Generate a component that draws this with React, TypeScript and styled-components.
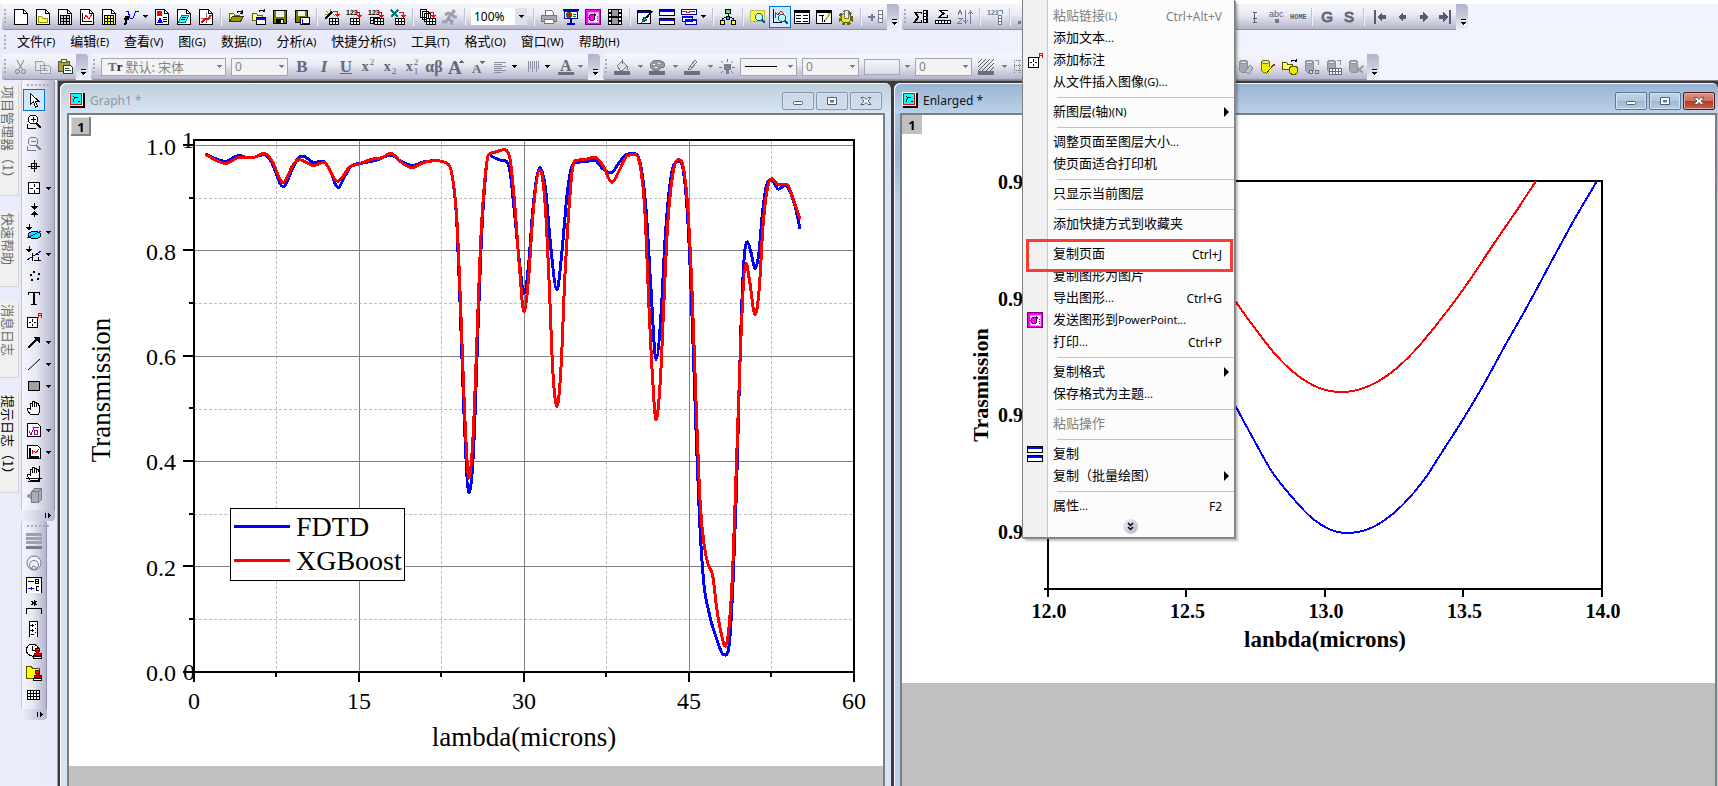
import React from "react";
import styled, { createGlobalStyle, css } from "styled-components";

const UI = `"Noto Sans CJK SC", "Noto Sans", sans-serif`;
const LATIN = `"Noto Sans", "Noto Sans CJK SC", sans-serif`;
const SERIF = `"Liberation Serif", serif`;
const GREY = "#757b8a";

const GlobalStyle = createGlobalStyle`
  * { box-sizing: border-box; }
  html, body { margin: 0; height: 100%; overflow: hidden; }
  body { font-family: ${UI}; font-size: 13px; color: #000; background: #ebecfb; }
  button, select { font: inherit; color: inherit; margin: 0; padding: 0; border: 0; background: none; }
  svg { display: block; }
`;

/* ---------- shell ---------- */

const Shell = styled.div`
  display: flex;
  flex-direction: column;
  height: 100vh;
  border-top: 4px solid #fff;
  background: linear-gradient(90deg, #ebecfb 0%, #eaebfa 30%, #f1f4fd 75%);
`;

const BarRow = styled.div`
  display: flex;
  flex: none;
  gap: 3px;
  height: 26px;
  padding-left: 2px;
`;

const Toolbar = styled.div`
  display: flex;
  flex: none;
  height: 26px;
`;

const ToolbarFace = styled.div`
  display: flex;
  align-items: center;
  border-bottom: 1px solid #9392ae;
  border-radius: 3px 0 0 3px;
  background: linear-gradient(180deg, #f6f7fd 0%, #ebecf5 40%, #b5b5cc 100%);
`;

const Grip = styled.span<{ $across?: boolean }>`
  flex: none;
  ${(p) =>
    p.$across
      ? css`
          width: 23px;
          height: 2px;
          margin: 4px 0 3px 5px;
          background: repeating-linear-gradient(90deg, #a9a9b9 0 2px, transparent 2px 4px);
        `
      : css`
          width: 2px;
          height: 15px;
          margin: 0 4px 0 2px;
          background: repeating-linear-gradient(180deg, #a9a9b9 0 2px, transparent 2px 4px);
        `}
`;

const BarEnd = styled.button`
  display: flex;
  align-items: flex-end;
  justify-content: center;
  width: 12px;
  padding: 0 0 4px 2px;
  border-radius: 0 4px 4px 0;
  background: linear-gradient(180deg, #b2b1ca 0%, #c9c9dc 45%, #f0f0fa 100%);
`;

const ToolButton = styled.button<{ $active?: boolean }>`
  display: flex;
  align-items: center;
  justify-content: center;
  flex: none;
  width: 22px;
  height: 22px;
  ${(p) =>
    p.$active &&
    css`
      border: 1px solid #0078d7;
      background: #d3e5f8;
    `}
`;

const GlyphButton = styled(ToolButton)<{ $italic?: boolean; $underline?: boolean; $size?: number; $sans?: boolean }>`
  font-family: ${(p) => (p.$sans ? `"Liberation Sans", sans-serif` : SERIF)};
  font-size: ${(p) => p.$size || 17}px;
  font-weight: ${(p) => (p.$sans ? "normal" : "bold")};
  font-style: ${(p) => (p.$italic ? "italic" : "normal")};
  text-decoration: ${(p) => (p.$underline ? "underline" : "none")};
  line-height: 20px;
  color: #636979;
  -webkit-text-stroke: ${(p) => (p.$sans ? "1px #636979" : "0")};
`;

const Scripts = styled.span`
  display: flex;
  flex-direction: column;
  justify-content: space-between;
  height: 18px;
  margin-left: 1px;
  font-size: 9px;
  line-height: 9px;
  font-weight: normal;
`;

const Drop = styled.button<{ $w?: number }>`
  display: flex;
  flex: none;
  align-items: center;
  justify-content: ${(p) => ((p.$w || 9) > 11 ? "center" : "flex-start")};
  width: ${(p) => p.$w || 9}px;
  height: 22px;
`;

const Sep = styled.span`
  flex: none;
  width: 2px;
  height: 18px;
  margin: 0 3px;
  border-left: 1px solid #c3c3d2;
  border-right: 1px solid #f3f3fa;
`;

const ComboBox = styled.label<{ $w: number; $plain?: boolean }>`
  position: relative;
  display: flex;
  align-items: center;
  flex: none;
  width: ${(p) => p.$w}px;
  height: ${(p) => (p.$plain ? 17 : 18)}px;
  margin: 0 3px 0 2px;
  border: ${(p) => (p.$plain ? "0" : "1px solid #a6a6b0")};
  background: ${(p) => (p.$plain ? "#fff" : "#f3f3f6")};
  color: ${(p) => (p.$plain ? "#000" : "#838383")};
  font-family: ${LATIN};
  font-size: 12px;
  padding-left: 3px;
  select {
    appearance: none;
    flex: 1;
    min-width: 0;
    height: 100%;
    line-height: 15px;
    outline: none;
    opacity: 1;
  }
`;

const ComboArrow = styled.span<{ $plain?: boolean }>`
  position: absolute;
  right: 0;
  top: 0;
  bottom: 0;
  width: 12px;
  display: flex;
  align-items: center;
  justify-content: center;
  pointer-events: none;
  background: ${(p) => (p.$plain ? "#dfe0ec" : "transparent")};
`;

const Swatch = styled.button`
  width: 36px;
  height: 16px;
  margin: 0 0 0 2px;
  border: 1px solid #a6a6b0;
  background: linear-gradient(180deg, #f4f5fb, #dcdce8);
`;

const MenuBar = styled.nav`
  display: flex;
  align-items: center;
  flex: none;
  gap: 15px;
  height: 24px;
  padding-left: 2px;
`;

const MenuBarItem = styled.button`
  padding-bottom: 2px;
  line-height: 20px;
  white-space: nowrap;
  &:first-of-type { margin-left: -8px; }
`;

const Latin = styled.span`
  font-family: ${LATIN};
  font-size: 11px;
`;

const Body = styled.div`
  display: flex;
  flex: 1;
  min-height: 0;
`;

const SideTabs = styled.div`
  display: flex;
  flex-direction: column;
  flex: none;
  gap: 15px;
  width: 21px;
  padding: 4px 2px 0 0;
`;

const SideTab = styled.button<{ $current?: boolean; $h: number }>`
  display: flex;
  align-items: center;
  height: ${(p) => p.$h}px;
  width: 19px;
  padding: 2px 2px 0 0;
  border-right: 1px solid #d4d4d4;
  border-bottom: 1px solid #d4d4d4;
  background: #f0f0f0;
  color: ${(p) => (p.$current ? "#000" : "#6d6d6d")};
  writing-mode: vertical-rl;
  text-orientation: sideways;
  text-align: left;
  line-height: 16px;
  white-space: pre;
`;

const ToolColumn = styled.div`
  display: flex;
  flex-direction: column;
  align-items: flex-start;
  flex: none;
  width: 36px;
`;

const SideBar = styled.div<{ $w: number }>`
  display: flex;
  flex-direction: column;
  width: ${(p) => p.$w}px;
`;

const SideFace = styled.div`
  display: flex;
  flex-direction: column;
  border-right: 1px solid #9392ae;
  border-left: 1px solid #c4c4d8;
  border-radius: 3px 3px 0 0;
  padding-bottom: 3px;
  background: linear-gradient(90deg, #f6f7fd 0%, #e6e7f2 45%, #b5b5cc 100%);
`;

const SideRow = styled.div`
  display: flex;
  padding-left: 1px;
`;

const SideEnd = styled.button`
  display: flex;
  align-items: center;
  justify-content: flex-end;
  height: 11px;
  padding-right: 3px;
  border-radius: 0 0 4px 4px;
  background: linear-gradient(90deg, #f0f0fa 0%, #b7b6ce 100%);
`;

/* ---------- document windows ---------- */

const Mdi = styled.main`
  position: relative;
  display: flex;
  flex: 1;
  min-width: 0;
  gap: 3px;
  padding: 2px 0 0 2px;
  border-left: 1px solid #9a9a9a;
  border-top: 1px solid #808080;
  background: #3b3b3b;
`;

const Doc = styled.section<{ $active?: boolean; $grow: number; $pad: string }>`
  display: flex;
  flex-direction: column;
  flex: ${(p) => p.$grow} 1 0;
  min-width: 0;
  padding: 0 ${(p) => p.$pad};
  border-radius: 6px 6px 0 0;
  box-shadow: inset 1px 1px 0 #f4f8fc;
  background: ${(p) =>
    p.$active
      ? "linear-gradient(180deg, #99b4d1 0, #b9d1ea 30px, #a9c4e0 31px, #9bb8d8 70px, #b9d1ea 120px)"
      : "linear-gradient(180deg, #bfcddb 0, #d7e4f2 30px)"};
`;

const DocTitle = styled.header<{ $active?: boolean }>`
  display: flex;
  align-items: center;
  flex: none;
  gap: 5px;
  height: 32px;
  padding: 4px ${(p) => (p.$active ? 0 : 1)}px 2px 0;
  font-family: ${LATIN};
  font-size: 12px;
  color: ${(p) => (p.$active ? "#101418" : "#8f979f")};
`;

const DocName = styled.span`
  flex: 1;
  white-space: pre;
`;

const CaptionButtons = styled.div`
  display: flex;
  gap: 2px;
  margin-top: 2px;
`;

const CaptionButton = styled.button<{ $kind: "idle" | "active" | "close" }>`
  display: flex;
  align-items: center;
  justify-content: center;
  width: 32px;
  height: 18px;
  border-radius: 2px;
  border: 1px solid ${(p) => (p.$kind === "close" ? "#4c1c28" : p.$kind === "active" ? "#5d7692" : "#8498b0")};
  box-shadow: inset 0 0 0 1px ${(p) => (p.$kind === "close" ? "#e3a79b" : "#d5e2ef")};
  background: ${(p) =>
    p.$kind === "close"
      ? "linear-gradient(180deg, #dc9587 0%, #cf6f5d 48%, #b83a22 52%, #c8604a 100%)"
      : p.$kind === "active"
        ? "linear-gradient(180deg, #c0d2e6 0%, #b3c9e0 48%, #9fb9d5 52%, #b4cce4 100%)"
        : "linear-gradient(180deg, #cbd7e4, #d0deec)"};
`;

const Client = styled.div`
  position: relative;
  flex: 1;
  min-height: 0;
  overflow: hidden;
  background: #c0c0c0;
  outline: 2px solid #7d7d7d;
  outline-offset: 0;
`;

const Sheet = styled.svg`
  width: 100%;
  height: auto;
  background: #fff;
  font-family: ${SERIF};
`;

const LayerBadge = styled.button<{ $raised?: boolean }>`
  position: absolute;
  left: ${(p) => (p.$raised ? 2 : 0)}px;
  top: ${(p) => (p.$raised ? 2 : 0)}px;
  width: 20px;
  height: 19px;
  background: #c0c0c0;
  font-family: "Noto Sans", sans-serif;
  font-weight: bold;
  font-size: 13px;
  line-height: 18px;
  text-align: center;
  box-shadow: ${(p) => (p.$raised ? "inset -2px -2px 0 #808080, inset 1px 1px 0 #dcdcdc" : "none")};
`;

/* ---------- context menu ---------- */

const Popup = styled.div`
  position: absolute;
  z-index: 5;
  left: 1022px;
  top: 0;
  width: 213px;
  padding-top: 5px;
  border: 1px solid #808080;
  border-top: 0;
  box-shadow: 1px 1px 0 #8c8c8c, 3px 3px 2px rgba(0, 0, 0, 0.25);
  background: linear-gradient(90deg, #f0f0f0 24px, #c8c8c8 24px, #c8c8c8 25px, #fcfcfc 25px);
`;

const PopupItem = styled.button<{ $off?: boolean }>`
  position: relative;
  display: flex;
  align-items: center;
  width: 100%;
  height: 22px;
  padding-right: 12px;
  color: ${(p) => (p.$off ? "#7f7f7f" : "#000")};
  white-space: nowrap;
`;

const PopupIcon = styled.span`
  flex: none;
  width: 27px;
  padding-left: 4px;
  margin-right: 3px;
`;

const PopupLabel = styled.span`
  flex: 1;
  text-align: left;
  line-height: 20px;
  padding-bottom: 2px;
`;

const Shortcut = styled.span`
  font-family: ${LATIN};
  font-size: 12px;
`;

const SubArrow = styled.span`
  position: absolute;
  right: 5px;
  border-left: 5px solid #000;
  border-top: 5px solid transparent;
  border-bottom: 5px solid transparent;
`;

const PopupRule = styled.hr`
  height: 1px;
  margin: 4px 0 3px 34px;
  border: 0;
  background: #c4c4c4;
`;

const Marker = styled.span`
  position: absolute;
  z-index: 1;
  left: 3px;
  right: 1px;
  top: -4px;
  bottom: -7px;
  border: 3px solid #fb3a3a;
`;

const PopupMore = styled.button`
  display: flex;
  justify-content: center;
  width: 100%;
  height: 20px;
  padding: 2px 0 0 3px;
`;

const MoreDisc = styled.span`
  display: flex;
  align-items: center;
  justify-content: center;
  width: 15px;
  height: 15px;
  border-radius: 50%;
  background: linear-gradient(135deg, #f0f0f8, #b5b5cc);
`;

/* ---------- icon drawings ---------- */

const Svg = ({ children, w = 16, h = 16, smooth }: { children: React.ReactNode; w?: number; h?: number; smooth?: boolean }) => (
  <svg width={w} height={h} viewBox={`0 0 ${w} ${h}`} fill="none" stroke="#000" shapeRendering={smooth ? "auto" : "crispEdges"} aria-hidden="true">
    {children}
  </svg>
);

const Page = ({ children }: { children?: React.ReactNode }) => (
  <Svg>
    <path d="M1.5 .5h9l4 4v11h-13z" fill="#fff" />
    <path d="M10.5 .5v4h4" />
    {children}
  </Svg>
);

const Grid = ({ x, y, c = 3, r = 3, s = 3, fill = "#fff", stroke = "#000" }: { x: number; y: number; c?: number; r?: number; s?: number; fill?: string; stroke?: string }) => (
  <g stroke={stroke}>
    <rect x={x + 0.5} y={y + 0.5} width={c * s} height={r * s} fill={fill} />
    {Array.from({ length: c - 1 }, (_, i) => (
      <path key={"c" + i} d={`M${x + 0.5 + (i + 1) * s} ${y}v${r * s}`} />
    ))}
    {Array.from({ length: r - 1 }, (_, i) => (
      <path key={"r" + i} d={`M${x} ${y + 0.5 + (i + 1) * s}h${c * s}`} />
    ))}
  </g>
);

const RedArrow = ({ x = 8, y = 1, color = "#f00" }) => (
  <g stroke={color} transform={`translate(${x} ${y})`}>
    <path d="M0 1.500h4.500v3" />
    <path d="M2 4h5l-2.500 3z" fill={color} stroke="none" />
  </g>
);

const Num = ({ x = 0, y = 6, color = "#000" }) => (
  <text x={x} y={y} fontSize="7" fontWeight="bold" fontFamily="Liberation Sans, sans-serif" fill={color} stroke="none">123</text>
);

const Lens = ({ x, y }: { x: number; y: number }) => (
  <g transform={`translate(${x} ${y})`}>
    <path d="M6 6l4 4" stroke="#0050c0" strokeWidth="2" />
    <circle cx="4" cy="4" r="3.500" fill="#bff" stroke="#067" />
  </g>
);

const Db = ({ color = "#a4a8b4", edge = "#8a8f9c" }) => (
  <path d="M1.500 2.500l2-1.500h4l2 1.500v9l-2 2h-4l-2-2zM1.500 3l2 1.500h4l2-1.500" fill={color} stroke={edge} />
);

const Stamp = () => (
  <g stroke="#600" fill="#f00">
    <path d="M9.500 5.500h4v3h-1v2h2.500v2h-7v-2h2.500v-2h-1z" />
    <path d="M7.500 13.500h8v2h-8z" fill="#fff" stroke="#000" />
  </g>
);

const HandShape = () => (
  <path d="M4.500 14.500l-3-4v-2h2l1 1v-6h2v-2h2v1h2v1h2v2h1v6l-1 3zM6.500 3v4M8.500 3v4M10.500 4v3" fill="#fff" />
);

const icon: Record<string, React.ReactNode> = {
  blank: <Page />,
  folderPage: (
    <Page><path d="M3.500 13.500v-6h3l1 1.500h5v4.500z" fill="#ff6" stroke="#990" /></Page>
  ),
  bookPage: (<Page><Grid x={3} y={6} fill="#d0d0d0" /></Page>),
  graphPage: (<Page><path d="M3.500 4v8.500h9" /><path d="M5 10l2-4 3 4 3-5" stroke="#f00" /></Page>),
  matrixPage: (<Page><Grid x={3} y={6} fill="#ff0" /></Page>),
  fx: (
    <Svg>
      <path d="M1 10h5M3 15v-7h2.500M1 15h2" strokeWidth="2" />
      <path d="M3 2h2l2 7h3l3-7h3" stroke="#00f" />
    </Svg>
  ),
  layoutPage: (
    <Page>
      <path d="M3 2h5v5h-5z" fill="#f00" stroke="none" /><path d="M4 13l2-4 2 4z" fill="#00f" stroke="#00f" /><path d="M9 8.500h4M9 10.500h4M9 12.500h4" />
    </Page>
  ),
  notesPage: (<Page><path d="M5.500 6.500h7l-3 7h-7z" fill="#3ff" stroke="#077" /><path d="M6 8.500h4M5 10.500h4" /></Page>),
  funcPage: (<Page><path d="M8.500 4v10M3 9.500h10" stroke="#777" /><path d="M3 14l4-4 3 0 3-4" stroke="#f00" strokeWidth="2" /></Page>),
  open: (
    <Svg>
      <path d="M1.500 12.500v-8h4l1 1.500h5v2" fill="#ff9" stroke="#660" />
      <path d="M1.500 12.500l3-5h11l-3 5z" fill="#990" stroke="#330" /><path d="M9 3.500c1-2 4-2 5 0M14.500 1v3h-3" />
    </Svg>
  ),
  openPage: (
    <Svg>
      <path d="M2.500 11.500v-7h4l1 1.500h5v5z" fill="#ff9" stroke="#660" /><path d="M9 2.500c1-2 4-2 5 0M14.500 0v3" />
      <path d="M6.500 8.500h9v7h-9z" fill="#fff" /><path d="M7 9.500h8" stroke="#00f" strokeWidth="2" />
    </Svg>
  ),
  save: (
    <Svg>
      <path d="M1.500 1.500h13v13h-13z" fill="#770" /><path d="M4 2h8v6h-8z" fill="#eee" stroke="none" /><path d="M4 10h8v4h-8z" fill="#000" stroke="none" /><path d="M9 11h2v3h-2z" fill="#fff" stroke="none" />
    </Svg>
  ),
  savePage: (
    <Svg>
      <path d="M1.500 1.500h12v12h-12z" fill="#770" /><path d="M4 2h7v5h-7z" fill="#eee" stroke="none" />
      <path d="M6.500 8.500h9v7h-9z" fill="#fff" /><path d="M8.500 10v4.500h6" stroke="#00f" />
    </Svg>
  ),
  wizard: (<Svg><path d="M1 10l7-7" strokeWidth="2" /><path d="M2 2l3 3M6 0v3M1 5h3M9 5l2 2" stroke="#a80" /><RedArrow x={9} y={1} /><Grid x={5} y={9} c={3} r={2} /></Svg>),
  import1: (<Svg><Num /><RedArrow x={9} y={2} /><Grid x={4} y={9} c={3} r={2} /></Svg>),
  importMany: (<Svg><Num /><RedArrow x={9} y={2} /><Grid x={2} y={8} c={3} r={2} /><Grid x={6} y={9} c={3} r={2} /></Svg>),
  excel: (<Svg><path d="M1 1l7 7M8 1l-7 7" stroke="#077" strokeWidth="2" /><RedArrow x={9} y={2} /><Grid x={5} y={9} c={3} r={2} /></Svg>),
  batch: (<Svg><path d="M.5 .5h6v8h-6zM2.500 2.500h6v8h-6zM4.500 4.500h6v8h-6z" fill="#fff" /><RedArrow x={9} y={2} /><Grid x={6} y={9} c={3} r={2} /></Svg>),
  runner: (<Svg smooth><circle cx="11.500" cy="2.500" r="2" fill="#9a9fad" stroke="none" /><path d="M3 6l3-2 4 1 2 3 3 0M9 5l-3 5 4 2-1 3.500M6 10l-2 3-4 0" stroke="#9a9fad" strokeWidth="3" /></Svg>),
  print: (<Svg><path d="M4.500 6.500v-5h6l2 2v3" fill="#fff" stroke="#777" /><path d="M.5 6.500h15v6h-15z" fill="#a9a9b0" stroke="#777" /><path d="M3.500 10.500h9v4h-9z" fill="#fff" stroke="#777" /><path d="M12 13h3" stroke="#dc0" /></Svg>),
  slide: (<Svg><path d="M0 1h16" stroke="#00a" strokeWidth="2" /><path d="M1.500 2.500h13v7h-13z" fill="#fff" stroke="#00a" /><circle cx="6" cy="6" r="2.500" fill="#f00" stroke="#080" /><path d="M10 5h3M10 7h3" stroke="#080" /><path d="M8 10v4M4 15h8" stroke="#00a" strokeWidth="2" /></Svg>),
  ppt: (<Svg><path d="M.5 .5h15v15h-15z" fill="#f0f" stroke="#707" /><path d="M3 3h10v10h-10z" fill="#fff" stroke="#f9f" /><circle cx="7" cy="8.500" r="3" fill="#f0f" stroke="#404" /><path d="M9 4.500l2 2M12 7h1M12 9h1M12 11h1" stroke="#707" /></Svg>),
  film: (<Svg><path d="M1 0h14v16h-14z" fill="#000" stroke="none" /><path d="M5 1h6v6h-6zM5 9h6v6h-6z" fill="#999" stroke="none" /><path d="M3 1v15M13 1v15" stroke="#fff" strokeWidth="2" strokeDasharray="2 2" /></Svg>),
  brush: (<Svg><path d="M.5 1.500h13v13h-13z" fill="#fff" /><path d="M1 3h12" stroke="#00a" strokeWidth="2" /><path d="M15 2l-6 7" strokeWidth="2" /><path d="M5 13l2-5 3 3z" fill="#0aa" stroke="#055" /></Svg>),
  twoWin: (<Svg><path d="M.5 .5h15v6h-15zM.5 9.500h15v6h-15z" fill="#fff" /><path d="M1 2h14M1 11h14" stroke="#00f" strokeWidth="2" /></Svg>),
  waveWin: (<Svg><path d="M.5 .5h15v5h-15z" fill="#fff" stroke="#00a" /><path d="M1 3l3-1 3 2 3-2 4 1" stroke="#f00" /><path d="M1.500 7.500h10v5h-10zM4.500 10.500h11v5h-11z" fill="#fff" stroke="#00a" /><path d="M2 8h9M5 11h10" stroke="#00f" strokeWidth="2" /></Svg>),
  tree: (<Svg><path d="M8 4v4M2.500 11v-1l5.500-3 5.500 3v1" /><path d="M5.500 .5h5v4h-5z" fill="#6d6" /><path d="M.5 11.500h4v4h-4zM11.500 11.500h4v4h-4z" fill="#ff0" /><path d="M6.500 7.500h3v3h-3z" fill="#0cc" /></Svg>),
  lensYellow: (<Svg><path d="M.5 1.500h14v11h-14z" fill="#ff3" stroke="#bb5" /><Lens x={5} y={4} /></Svg>),
  lensGraph: (<Svg><path d="M1.500 0v14M1 13.500h9" /><path d="M3 9v-6l3 3 3-4 3 3" stroke="#f00" /><Lens x={6} y={5} /></Svg>),
  table: (<Svg><path d="M.5 1.500h15v13h-15z" fill="#fff" /><path d="M1 3h14" strokeWidth="2" /><path d="M2 6.500h5M9 6.500h5M2 9.500h5M9 9.500h5M2 12.500h5M9 12.500h5" /></Svg>),
  notePen: (<Svg><path d="M.5 1.500h15v13h-15z" fill="#fff" /><path d="M1 3h14" strokeWidth="2" /><path d="M3 6.500h5M6 6v7" /><path d="M14 4l-5 8" stroke="#cc0" strokeWidth="2" /><path d="M8 13l1-2" /></Svg>),
  gear: (<Svg><circle cx="8" cy="9" r="5" fill="#ee0" stroke="#550" /><circle cx="8" cy="9" r="6" stroke="#661" strokeWidth="3" strokeDasharray="3 2" /><path d="M6 1h4v8h-4z" fill="#eee" stroke="#777" /></Svg>),
  addCol: (<Svg><path d="M0 8h7M3.500 4.500v7" stroke={GREY} strokeWidth="2" /><Grid x={10} y={1} c={1} r={3} s={4} stroke={GREY} /></Svg>),
  sumCol: (<Svg><path d="M8 5v-2h-7l4 5-4 5h7v-2" /><path d="M2 3l4 5-4 5" /><Grid x={10} y={1} c={1} r={4} s={3} /><path d="M14.500 1v13" /></Svg>),
  sumRow: (<Svg><path d="M12 2v-1h-8l4 3.500-4 3.500h8v-2" /><path d="M5 1l4 3.500-4 3.500" /><Grid x={0} y={11} c={5} r={1} /></Svg>),
  sort: (<Svg><path d="M1 6l2-5 2 5M1 9.500h4l-4 5h4" stroke={GREY} /><path d="M8.500 1v13M6.500 11l2 3 2-3M13.500 15v-13M11.500 5l2-3 2 3" stroke={GREY} /></Svg>),
  numCol: (<Svg><Num color={GREY} /><path d="M12 1.500h3v3" stroke={GREY} /><Grid x={11} y={6} c={1} r={3} stroke={GREY} /></Svg>),
  bars: (<Svg><path d="M1 12h3v3h-3zM6 7h3v8h-3zM11 3h3v12h-3z" fill={GREY} stroke="none" /></Svg>),
  ibeam: (<Svg><path d="M9.500 3v11M8 3.500h4M8 13.500h4M8 9h4" stroke="#5a6070" /></Svg>),
  abc: (<Svg w={22}><text x="5" y="8" fontSize="9" fontFamily="Liberation Sans, sans-serif" fill="#5a6070" stroke="none">abc</text><path d="M11 10h4v4h-4z" fill={GREY} stroke="none" /></Svg>),
  home: (<Svg w={22}><text x="4" y="10" fontSize="7" fontWeight="bold" fontFamily="Liberation Mono, monospace" fill="#5a6070" stroke="none">HOME</text></Svg>),
  first: (<Svg><path d="M4 1v14" stroke="#555c6c" strokeWidth="2" /><path d="M6 8l5-5v3h4v4h-4v3z" fill="#555c6c" stroke="none" /></Svg>),
  prev: (<Svg><path d="M5 8l5-5v3h3v4h-3v3z" fill="#555c6c" stroke="none" /></Svg>),
  next: (<Svg><path d="M13 8l-5-5v3h-3v4h3v3z" fill="#555c6c" stroke="none" /></Svg>),
  last: (<Svg><path d="M13 1v14" stroke="#555c6c" strokeWidth="2" /><path d="M11 8l-5-5v3h-4v4h4v3z" fill="#555c6c" stroke="none" /></Svg>),
  cut: (<Svg smooth><path d="M4 1l5 9M11 1l-5 9" stroke={GREY} /><circle cx="4.500" cy="12.500" r="2" stroke={GREY} /><circle cx="10.500" cy="12.500" r="2" stroke={GREY} /></Svg>),
  copy: (<Svg><path d="M.5 2.500h7l2 2v7h-9zM5.500 6.500h8l2 2v6h-10z" fill="#e4e5ee" stroke="#9a9fad" /><path d="M7 9.500h5M7 11.500h6" stroke="#9a9fad" /></Svg>),
  paste: (<Svg><path d="M1.500 2.500h11v10h-11z" fill="#a9a040" stroke="#554" /><path d="M4.500 .5h5v3h-5z" fill="#ff6" stroke="#554" /><path d="M6.500 6.500h7l2 2v6h-9z" fill="#fff" stroke="#242" /><path d="M8 9.500h4M8 11.500h6" stroke="#242" /></Svg>),
  alignLines: (<Svg><path d="M2 3.500h12M2 5.500h8M2 7.500h12M2 9.500h8M2 11.500h12M2 13.500h8" stroke="#8a8f9d" /></Svg>),
  spaceLines: (<Svg><path d="M3.500 2v11M5.500 2v8M7.500 2v11M9.500 2v8M11.500 2v11M13.500 2v8" stroke="#8a8f9d" /></Svg>),
  growFont: (<Svg><text x="0" y="15" fontSize="19" fontWeight="bold" fontFamily="Liberation Serif, serif" fill="#636979" stroke="none">A</text><path d="M11 4h5l-2.500-3z" fill="#636979" stroke="none" /></Svg>),
  shrinkFont: (<Svg><text x="2" y="14" fontSize="13" fontWeight="bold" fontFamily="Liberation Serif, serif" fill="#636979" stroke="none">A</text><path d="M10 2h5l-2.500 3z" fill="#636979" stroke="none" /></Svg>),
  fontColor: (<Svg><text x="2" y="12" fontSize="16" fontWeight="bold" fontFamily="Liberation Serif, serif" fill="#636979" stroke="none">A</text><path d="M0 13h16v3h-16z" fill="#6b6f7c" stroke="none" /></Svg>),
  fill: (<Svg><path d="M3 7l5-5 5 5-4 4h-3z" fill="#e0e1ea" stroke={GREY} /><path d="M8 5v-5M13 7l1 4" stroke={GREY} /><path d="M0 12h16v4h-16z" fill="#6b6f7c" stroke="none" /></Svg>),
  palette: (<Svg><path d="M1 5l4-4h6l4 3v4l-3 1-2 2h-6l-3-3z" fill="#9599a6" stroke={GREY} /><path d="M4 5h2M9 4h2M6 8h2" stroke="#fff" /><path d="M0 12h16v4h-16z" fill="#6b6f7c" stroke="none" /></Svg>),
  pen: (<Svg><path d="M4 10l7-9 2 2-7 8z" fill="#e0e1ea" stroke={GREY} /><path d="M0 12h16v4h-16z" fill="#6b6f7c" stroke="none" /></Svg>),
  bulb: (<Svg><path d="M5 5h6v5h-2v4h-2v-4h-2z" fill="#7d828f" stroke={GREY} /><path d="M8 0v3M2 2l2 2M14 2l-2 2M0 8h3M13 8h3M2 14l2-2M14 14l-2-2" stroke={GREY} /></Svg>),
  hatch: (<Svg><path d="M0 4l4-4M0 8l8-8M0 12l12-12M4 12l12-12M8 12l8-8M12 12l4-4" stroke="#5a5f6c" /><path d="M0 12h16v4h-16z" fill="#6b6f7c" stroke="none" /></Svg>),
  dotGrid: (<Svg><path d="M1.500 1v13M6.500 1v13M11.500 1v13M1 1.500h13M1 6.500h13M1 11.500h13" stroke={GREY} strokeDasharray="1 1" /></Svg>),
  dbLens: (<Svg><Db /><path d="M9 14l-2-2 5-6 3 3-3 5z" fill="#bcc0ca" stroke="#8a8f9c" /></Svg>),
  dbPen: (<Svg><Db color="#ee0" edge="#770" /><path d="M7 14l6-8" stroke="#ff0" strokeWidth="3" /><path d="M6 15l8-10" stroke="#440" /><path d="M13 5h2v2h-2z" fill="#f00" stroke="none" /></Svg>),
  dbOpen: (<Svg><path d="M.5 10.500v-7h4l1 1.500h5v5z" fill="#ff6" stroke="#550" /><path d="M9 2.500c1-2 4-2 5 0M14.500 0v3" /><path d="M7.500 8.500l2-1h4l2 1v5l-2 1.500h-4l-2-1.500z" fill="#ee0" stroke="#550" /></Svg>),
  dbGlasses: (<Svg><Db /><path d="M11 1.500h3v4" stroke="#8a8f9c" /><circle cx="7" cy="13" r="2" stroke="#666c7a" fill="#ddd" /><circle cx="13" cy="13" r="2" stroke="#666c7a" fill="#ddd" /></Svg>),
  dbGrid: (<Svg><Db /><path d="M11 1.500h3v4" stroke="#8a8f9c" /><Grid x={3} y={9} c={4} r={2} stroke="#666c7a" /></Svg>),
  dbX: (<Svg><Db /><path d="M8 7l7 7M15 7l-7 7" stroke="#9a9fad" strokeWidth="2" /></Svg>),
  pointer: (<Svg><path d="M4.500 1.500v11l3-2.500 2 5 2-1-2-4.500h3.500z" fill="#fff" /></Svg>),
  zoomIn: (<Svg><circle cx="7" cy="5.500" r="4.500" fill="#fff" /><path d="M4.500 5.500h5M7 3v5" /><path d="M10 9l5 5" strokeWidth="2" /><path d="M1.500 10v4.500h8" /></Svg>),
  zoomOut: (<Svg><circle cx="7" cy="5.500" r="4.500" stroke={GREY} /><path d="M4.500 5.500h5" stroke={GREY} /><path d="M10 9l5 5" strokeWidth="2" stroke={GREY} /><path d="M1.500 10v4.500h8" stroke={GREY} /></Svg>),
  cross: (<Svg><path d="M8 2v12M2 8h12" /><path d="M5.500 5.500h5v5h-5z" /></Svg>),
  target: (<Svg><path d="M2.500 2.500h11v11h-11z" fill="#fff" /><path d="M8 4v3M8 10v3M4 8h3M10 8h3" /></Svg>),
  updown: (<Svg><path d="M8.500 1v5M8.500 11v4" /><path d="M5 4h7l-3.500 4zM5 13h7l-3.500-4z" fill="#000" stroke="none" /></Svg>),
  mask: (<Svg><ellipse cx="8.500" cy="11" rx="6.500" ry="3.500" fill="#0ee" /><path d="M1 14l14-7" stroke="#00f" /><path d="M3 0v4M0 3h6l-3 3z" fill="#000" /></Svg>),
  cutLine: (<Svg><path d="M1 14l14-9" stroke="#00f" /><path d="M3 0v4M0 3h6l-3 3z" fill="#000" /><path d="M6.500 7v8M9 8.500h4M12 11v4M8 14.500h7" /></Svg>),
  dots: (<Svg><path d="M7 3h2v2h-2zM4 6h2v2h-2zM12 5h2v2h-2zM5 11h2v2h-2zM11 10h2v2h-2z" fill="#000" stroke="none" /></Svg>),
  letterT: (<Svg><path d="M2.500 5v-3h11v3M5 14h6" /><path d="M8 2v12" strokeWidth="2" /></Svg>),
  annotate: (<Svg><path d="M1.500 5.500h10v10h-10z" fill="#fff" /><path d="M6.500 7v3M6.500 12v2M3 10.500h2M8 10.500h2" /><path d="M12.500 6v-4l1-1h1l1 1v4M12.500 3.500h3" stroke="#f00" /></Svg>),
  arrow: (<Svg><path d="M2 14l9-9" strokeWidth="2" /><path d="M7 3h7v7z" fill="#000" stroke="none" /></Svg>),
  line: (<Svg smooth><path d="M2 14l12-11" /></Svg>),
  rect: (<Svg><path d="M2.500 3.500h11v9h-11z" fill="#a0a0a0" /></Svg>),
  hand: (<Svg><HandShape /></Svg>),
  rootPage: (<Svg><path d="M1.500 1.500h10l3 3v10h-13z" fill="#fff" /><path d="M3 9l2 4 3-8h5" stroke="#909" /><path d="M8.500 8v4h3v-4z" stroke="#909" /></Svg>),
  curvePage: (<Svg><path d="M1.500 1.500h10l3 3v10h-13z" fill="#fff" /><path d="M4 4v8.500h9" strokeWidth="2" /><path d="M6 10v-4l4 3 3-4" stroke="#f00" /></Svg>),
  handAxes: (<Svg><HandShape /><path d="M0 12.500h16M13.500 0v16M2 15.500h12" /></Svg>),
  cube: (<Svg><path d="M5.500 3.500l3-3h7v11l-3 3h-7z" fill="#a9adb8" stroke={GREY} /><path d="M5.500 3.500h7v11M12.500 3.500l3-3" stroke={GREY} /><path d="M0 8l5-3v6z" fill="#9a9fad" stroke="none" /></Svg>),
  bands: (<Svg><path d="M0 1.500h16M0 5.500h16M0 9.500h16" stroke="#9da1b0" strokeWidth="3" /><path d="M0 14h16" stroke={GREY} strokeWidth="3" /></Svg>),
  rings: (<Svg smooth><circle cx="8" cy="8" r="7" stroke={GREY} fill="#f2f3fa" /><circle cx="8" cy="10" r="4.500" stroke={GREY} /><path d="M6 15v-3l2-1 2 1v3" stroke={GREY} /></Svg>),
  legend: (<Svg><path d="M.5 16v-15.500h15v15.500" fill="#fff" /><path d="M2 4.500h6M9.500 2.500h3v4h-3zM9.500 4.500h3" /><path d="M13 9.500h-3v4h3" /><path d="M2 11.500h6M5 10v3" stroke="#00f" /></Svg>),
  star: (<Svg><path d="M8 1v6M5 2l6 4M11 2l-6 4" /><path d="M.5 15v-5.500h15v5.500" /></Svg>),
  scale: (<Svg><path d="M3.500 16v-15.500h8v15.500" fill="#fff" /><path d="M6 3v3M4 4.500h4M9 3.500h1M9 7.500h1M6 8v3M4 9.500h4M9 11.500h1M5 13.500h3" /></Svg>),
  clock: (<Svg><circle cx="6.500" cy="7" r="6" fill="#fff" /><path d="M6.500 3v4h3" /><Stamp /></Svg>),
  folderStamp: (<Svg><path d="M.5 13.500v-12h5l1 2h7v10z" fill="#ff0" stroke="#550" /><Stamp /></Svg>),
  sheet: (<Svg><Grid x={1} y={3} c={4} r={3} /></Svg>),
};

const Caret = ({ color = "#000" }) => (
  <svg width="6" height="3" viewBox="0 0 6 3" shapeRendering="crispEdges" aria-hidden="true">
    <path d="M0 0h6l-3 3z" fill={color} />
  </svg>
);

const OverflowMark = () => (
  <svg width="7" height="8" viewBox="0 0 7 8" shapeRendering="crispEdges" aria-hidden="true">
    <path d="M2 2h5v1h-5zM3 7l4-2v1l-2 2z" fill="#fff" />
    <path d="M1 1h5v1h-5zM1 4h5l-2.500 3z" fill="#000" />
  </svg>
);

const SideMark = () => (
  <svg width="8" height="7" viewBox="0 0 8 7" shapeRendering="crispEdges" aria-hidden="true">
    <path d="M1 1h1v5h-1zM4 0v7l3-3.500z" fill="#000" />
  </svg>
);

const GraphIcon = () => (
  <Svg>
    <path d="M1 1h15v15h-15z" fill="#000" stroke="none" />
    <path d="M0 0h14v14h-14z" fill="#fff" stroke="none" />
    <path d="M1.500 1.500h11v11h-11z" fill="#0ff" stroke="#f00" />
    <path d="M4 10c1-5 3-6 5-4M4 4h1M9 9h2" />
  </Svg>
);

const CaptionGlyph = ({ name }: { name: "min" | "max" | "x" }) => (
  <svg width="12" height="10" viewBox="0 0 12 10" fill="#fff" stroke="#4f5d70" aria-hidden="true">
    {name === "min" && <rect x="1.500" y="5.500" width="9" height="3" rx="1" />}
    {name === "max" && <path fillRule="evenodd" d="M1.500 1.500h9v7h-9zM4.500 4.500v1.500h3v-1.500z" />}
    {name === "x" && <path d="M1 1.500h3l2 2 2-2h3l-3 3.500 3 3.500h-3l-2-2-2 2h-3l3-3.500z" />}
  </svg>
);

/* ---------- pieces ---------- */

/* "|" is a separator; a ":v" or ":off" suffix adds a black or a greyed drop-down arrow */
const Tools = ({ list, active, drop = 9 }: { list: string[]; active?: string; drop?: number }) => (
  <>
    {list.map((t, i) => {
      if (t === "|") return <Sep key={i} />;
      const [name, arrow] = t.split(":");
      return (
        <React.Fragment key={i}>
          <ToolButton $active={name === active} aria-label={name}>{icon[name]}</ToolButton>
          {arrow && <Drop $w={drop} aria-label={name + " options"}><Caret color={arrow === "off" ? "#777d8b" : "#000"} /></Drop>}
        </React.Fragment>
      );
    })}
  </>
);

const Bar = ({ children }: { children: React.ReactNode }) => (
  <Toolbar role="toolbar">
    <ToolbarFace><Grip />{children}</ToolbarFace>
    <BarEnd aria-label="More buttons"><OverflowMark /></BarEnd>
  </Toolbar>
);

const Combo = ({ w, value, label, plain, lead }: { w: number; value: string; label: string; plain?: boolean; lead?: React.ReactNode }) => (
  <ComboBox $w={w} $plain={plain}>
    {lead}
    <select aria-label={label} defaultValue={value}><option>{value}</option></select>
    <ComboArrow $plain={plain}><Caret color={plain ? "#000" : "#777d8b"} /></ComboArrow>
  </ComboBox>
);

const FontMark = styled.span`
  font: bold 13px/14px ${SERIF};
  color: #6a6a6a;
  margin: 0 3px;
  b { color: #222; }
`;

const FontCombo = styled.div`
  display: flex;
  select { font-family: ${UI}; font-size: 13px; }
`;

const LineSample = styled.span`
  position: absolute;
  left: 4px;
  width: 32px;
  height: 1px;
  background: #000;
`;

/* sets the Latin runs of a label one size down from the Chinese ones */
const Mixed = ({ text }: { text: string }) => (
  <>
    {text.split(/([\x20-\x7e]+)/).map((s, i) => (i % 2 ? <Latin key={i}>{s}</Latin> : s))}
  </>
);

const menus = ["文件(F)", "编辑(E)", "查看(V)", "图(G)", "数据(D)", "分析(A)", "快捷分析(S)", "工具(T)", "格式(O)", "窗口(W)", "帮助(H)"];

const plotTools = ["bars", "bars", "sort", "sort", "|", "bars", "sumRow", "sumCol", "bars", "bars", "ibeam"];

const sideTabs = [
  { text: "项目管理器（1）", h: 112 },
  { text: "快速帮助", h: 76 },
  { text: "消息日志", h: 76 },
  { text: "提示日志（1）", h: 100, current: true },
];

const tools1 = ["pointer", "zoomIn", "zoomOut", "cross", "target:v", "updown", "mask:v", "cutLine:v", "dots", "letterT", "annotate", "arrow:v", "line:v", "rect:v", "hand", "rootPage:v", "curvePage:v", "handAxes", "cube"];
const tools2 = ["bands", "rings", "legend", "star", "scale", "clock", "folderStamp", "sheet"];

const Side = ({ list, w, active }: { list: string[]; w: number; active?: string }) => (
  <SideBar $w={w} role="toolbar">
    <SideFace>
      <Grip $across />
      {list.map((t) => (
        <SideRow key={t}><Tools list={[t]} active={active} /></SideRow>
      ))}
    </SideFace>
    <SideEnd aria-label="More tools"><SideMark /></SideEnd>
  </SideBar>
);

/* ---------- charts ---------- */

type Pt = [number, number];

/* monotone cubic curve through the points, as an SVG path */
function curve(p: Pt[]): string {
  const n = p.length;
  const h = p.slice(1).map((q, i) => q[0] - p[i][0]);
  const d = p.slice(1).map((q, i) => (q[1] - p[i][1]) / h[i]);
  const m = p.map((_, i) => {
    if (i === 0) return d[0];
    if (i === n - 1) return d[n - 2];
    if (d[i - 1] * d[i] <= 0) return 0;
    const mean = (h[i] * d[i - 1] + h[i - 1] * d[i]) / (h[i - 1] + h[i]);
    return Math.sign(mean) * Math.min(Math.abs(mean), 3 * Math.abs(d[i - 1]), 3 * Math.abs(d[i]));
  });
  let s = `M${p[0][0]} ${p[0][1]}`;
  for (let i = 0; i < n - 1; i++) {
    const t = h[i] / 3;
    s += `C${(p[i][0] + t).toFixed(2)} ${(p[i][1] + m[i] * t).toFixed(2)} ${(p[i + 1][0] - t).toFixed(2)} ${(p[i + 1][1] - m[i + 1] * t).toFixed(2)} ${p[i + 1][0].toFixed(2)} ${p[i + 1][1].toFixed(2)}`;
  }
  return s;
}

const xgboost: Pt[] = [
  [1, 0.983], [2.9, 0.966], [4.1, 0.977], [5.3, 0.977], [6.4, 0.985], [7.05, 0.972], [8.1, 0.93], [9.1, 0.966], [9.6, 0.973], [10.9, 0.962], [11.8, 0.968],
  [13.05, 0.932], [14.2, 0.96], [15, 0.965], [16.2, 0.974], [17.1, 0.977], [17.9, 0.985], [18.8, 0.969], [19.8, 0.958], [20.9, 0.968], [22, 0.971], [22.9, 0.967],
  [23.4, 0.95], [23.9, 0.858], [24.24, 0.694], [24.58, 0.504], [25, 0.368], [25.4, 0.46], [25.74, 0.643], [26.04, 0.808], [26.38, 0.921], [26.8, 0.983], [27.5, 0.988],
  [28.15, 0.992], [28.66, 0.981], [29.1, 0.903], [29.56, 0.776], [30, 0.684], [30.4, 0.744], [30.8, 0.865], [31.45, 0.954], [31.96, 0.877], [32.3, 0.732], [32.6, 0.58],
  [33, 0.504], [33.4, 0.592], [33.7, 0.744], [34, 0.852], [34.4, 0.955], [34.7, 0.972], [35.5, 0.973], [36.4, 0.978], [37.15, 0.963], [38, 0.93], [38.74, 0.956],
  [39.4, 0.981], [40.1, 0.983], [40.45, 0.972], [41, 0.871], [41.36, 0.694], [41.7, 0.554], [42, 0.478], [42.43, 0.567], [42.7, 0.694], [43.03, 0.839], [43.54, 0.947],
  [44.06, 0.973], [44.53, 0.953], [44.9, 0.877], [45.26, 0.732], [45.7, 0.478], [46, 0.327], [46.4, 0.238], [46.76, 0.203], [47.15, 0.184], [47.5, 0.124],
  [47.93, 0.073], [48.3, 0.049], [48.66, 0.09], [49, 0.21], [49.2, 0.327], [49.4, 0.447], [49.7, 0.625], [50.2, 0.776], [50.5, 0.744], [51, 0.679], [51.4, 0.732],
  [51.7, 0.839], [52.1, 0.915], [52.5, 0.937], [53.2, 0.925], [53.9, 0.926], [54.3, 0.909], [54.7, 0.884], [55.1, 0.86],
];

const fdtd: Pt[] = [
  [1, 0.984], [2.85, 0.97], [4.1, 0.981], [4.9, 0.977], [5.5, 0.978], [6.4, 0.983], [7, 0.97], [8.1, 0.922], [8.9, 0.953], [9.35, 0.973], [9.9, 0.98], [10.9, 0.968],
  [11.7, 0.97], [12.3, 0.956], [13.1, 0.92], [13.7, 0.941], [14.3, 0.961], [15.4, 0.967], [16.6, 0.972], [17.9, 0.982], [18.8, 0.97], [19.9, 0.962], [20.9, 0.969],
  [22, 0.971], [22.9, 0.967], [23.4, 0.95], [23.9, 0.85], [24.2, 0.694], [24.52, 0.504], [25, 0.34], [25.5, 0.46], [25.8, 0.643], [26.1, 0.808], [26.42, 0.921],
  [26.8, 0.983], [27.2, 0.978], [27.9, 0.972], [28.4, 0.97], [28.75, 0.947], [29.17, 0.865], [29.6, 0.776], [30, 0.718], [30.4, 0.77], [30.8, 0.877], [31.45, 0.958],
  [31.97, 0.915], [32.4, 0.814], [33, 0.726], [33.46, 0.801], [33.9, 0.903], [34.25, 0.953], [34.7, 0.968], [35.5, 0.969], [36.4, 0.972], [37.15, 0.956], [37.9, 0.948],
  [38.7, 0.969], [39.3, 0.983], [40, 0.985], [40.45, 0.975], [41.1, 0.877], [41.53, 0.732], [42, 0.594], [42.5, 0.694], [42.8, 0.814], [43.2, 0.915], [44.06, 0.97],
  [44.5, 0.95], [44.86, 0.87], [45.2, 0.72], [45.62, 0.47], [45.95, 0.295], [46.35, 0.168], [46.76, 0.118], [47.54, 0.061], [48.03, 0.035], [48.3, 0.032], [48.7, 0.061],
  [49, 0.17], [49.3, 0.335], [49.45, 0.447], [49.7, 0.64], [50, 0.782], [50.3, 0.817], [50.66, 0.795], [51, 0.766], [51.35, 0.795], [51.7, 0.877], [52.1, 0.928],
  [52.45, 0.935], [53.15, 0.917], [53.75, 0.925], [54.2, 0.912], [54.65, 0.884], [55.1, 0.841],
];

const zoomRed: Pt[] = [[1200, 238], [1234, 299], [1254, 327], [1275.5, 354.5], [1297, 375], [1318, 387.5], [1341, 392], [1364, 388], [1388, 375], [1414.5, 351], [1436, 325.4], [1462.6, 290.3], [1494.7, 242.5], [1516, 211.5], [1536, 181]];
const zoomBlue: Pt[] = [[1200, 330], [1234, 403], [1254, 440], [1270, 468.6], [1291.5, 496.5], [1313, 519], [1329, 529], [1346.6, 533], [1363.7, 530.7], [1382.4, 521.7], [1403.8, 503.7], [1425, 478.5], [1441, 453.7], [1462.6, 420], [1484, 384], [1505, 345.6], [1526.7, 307.4], [1553.4, 257.8], [1574.8, 218.7], [1597, 181]];

const X = (v: number) => 194 + 11 * v;
const Y = (v: number) => 672 - 526.5 * v;
const plot = (p: Pt[]) => curve(p.map(([x, y]) => [X(x), Y(y)] as Pt));

const majorsY = [0, 0.2, 0.4, 0.6, 0.8, 1];
const minorsY = [0.1, 0.3, 0.5, 0.7, 0.9];
const majorsX = [0, 15, 30, 45, 60];
const minorsX = [7.5, 22.5, 37.5, 52.5];

const TransmissionChart = () => (
  <Sheet viewBox="69 115 814 651" role="img" aria-label="Transmission against lambda">
    <g shapeRendering="crispEdges" fill="none">
      <g stroke="#bdbdbd" strokeDasharray="3 2">
        {minorsY.map((v) => <path key={v} d={`M194 ${Math.round(Y(v)) + 0.5}H853`} />)}
        {minorsX.map((v) => <path key={v} d={`M${Math.floor(X(v)) + 0.5} 141V672`} />)}
      </g>
      <g stroke="#808080">
        {majorsY.slice(1).map((v) => <path key={v} d={`M194 ${Math.floor(Y(v)) + 0.5}H853`} />)}
        {majorsX.slice(1, 4).map((v) => <path key={v} d={`M${X(v) + 0.5} 141V672`} />)}
      </g>
      <g strokeWidth="3" strokeLinejoin="round">
        <path d={plot(fdtd)} stroke="#00f" />
        <path d={plot(xgboost)} stroke="#f00" />
      </g>
      <g stroke="#000" strokeWidth="2">
        <path d="M194 140H854V672H194Z" />
        {majorsY.map((v) => <path key={v} d={`M183 ${Math.floor(Y(v))}h11`} />)}
        {minorsY.map((v) => <path key={v} d={`M189 ${Math.floor(Y(v))}h5`} />)}
        {majorsX.map((v) => <path key={v} d={`M${X(v)} 672v10`} />)}
        {minorsX.map((v) => <path key={v} d={`M${Math.floor(X(v))} 672v5`} />)}
      </g>
      <rect x="230.5" y="508.5" width="174" height="72" fill="#fff" stroke="#000" />
      <path d="M234 526.500h56" stroke="#00f" strokeWidth="3" />
      <path d="M234 560.500h56" stroke="#f00" strokeWidth="3" />
    </g>
    <g fontSize="24">
      {majorsY.map((v) => <text key={v} x="176" y={Math.round(Y(v)) + 9} textAnchor="end">{v.toFixed(1)}</text>)}
      {majorsX.map((v) => <text key={v} x={X(v)} y="709" textAnchor="middle">{v}</text>)}
      <text x="182" y="148">1</text>
      <text x="183" y="680">0</text>
    </g>
    <g fontSize="28">
      <text x="296" y="536">FDTD</text>
      <text x="296" y="570">XGBoost</text>
    </g>
    <g fontSize="27" textAnchor="middle">
      <text x="524" y="746">lambda(microns)</text>
      <text transform="translate(110 390) rotate(-90)">Transmission</text>
    </g>
  </Sheet>
);

const EnlargedChart = () => (
  <Sheet viewBox="902 115 813 568" role="img" aria-label="Enlarged view around 13 microns">
    <g shapeRendering="crispEdges" fill="none" strokeWidth="2">
      <path d="M1048 181H1602V589H1048Z" stroke="#000" />
      <path d="M1044 589h4M1048 589v8M1186 589v8M1325 589v8M1463 589v8M1602 589v8" stroke="#000" />
      <path d={curve(zoomRed)} stroke="#f00" />
      <path d={curve(zoomBlue)} stroke="#00f" />
    </g>
    <g fontSize="20" fontWeight="bold">
      {["0.95", "0.94", "0.93", "0.92"].map((t, i) => <text key={t} x="998" y={189 + Math.round(i * 116.7)}>{t}</text>)}
      {["12.0", "12.5", "13.0", "13.5", "14.0"].map((t, i) => <text key={t} x={1049 + i * 138.5} y="618" textAnchor="middle">{t}</text>)}
    </g>
    <g fontWeight="bold" textAnchor="middle">
      <text x="1325" y="647" fontSize="23">lanbda(microns)</text>
      <text transform="translate(988 385) rotate(-90)" fontSize="22">Trasmission</text>
    </g>
  </Sheet>
);

const DocWindow = ({ name, active, grow, pad, children }: { name: string; active?: boolean; grow: number; pad: string; children: React.ReactNode }) => (
  <Doc $active={active} $grow={grow} $pad={pad}>
    <DocTitle $active={active}>
      <GraphIcon />
      <DocName>{name}</DocName>
      <CaptionButtons>
        <CaptionButton $kind={active ? "active" : "idle"} aria-label="Minimize"><CaptionGlyph name="min" /></CaptionButton>
        <CaptionButton $kind={active ? "active" : "idle"} aria-label="Maximize"><CaptionGlyph name="max" /></CaptionButton>
        <CaptionButton $kind={active ? "close" : "idle"} aria-label="Close"><CaptionGlyph name="x" /></CaptionButton>
      </CaptionButtons>
    </DocTitle>
    <Client>
      {children}
      <LayerBadge $raised={!active}>1</LayerBadge>
    </Client>
  </Doc>
);

type Entry = { text?: string; keys?: string; icon?: string; sub?: boolean; off?: boolean; marked?: boolean };

const entries: Entry[] = [
  { text: "粘贴链接(L)", keys: "Ctrl+Alt+V", off: true },
  { text: "添加文本..." },
  { text: "添加标注", icon: "annotate" },
  { text: "从文件插入图像(G)..." },
  {},
  { text: "新图层(轴)(N)", sub: true },
  {},
  { text: "调整页面至图层大小..." },
  { text: "使页面适合打印机" },
  {},
  { text: "只显示当前图层" },
  {},
  { text: "添加快捷方式到收藏夹" },
  {},
  { text: "复制页面", keys: "Ctrl+J", marked: true },
  { text: "复制图形为图片" },
  { text: "导出图形...", keys: "Ctrl+G" },
  { text: "发送图形到PowerPoint...", icon: "ppt" },
  { text: "打印...", keys: "Ctrl+P" },
  {},
  { text: "复制格式", sub: true },
  { text: "保存格式为主题..." },
  {},
  { text: "粘贴操作", off: true },
  {},
  { text: "复制", icon: "twoWin" },
  { text: "复制（批量绘图）", sub: true },
  {},
  { text: "属性...", keys: "F2" },
];

const ContextMenu = () => (
  <Popup role="menu">
    {entries.map((e, i) =>
      e.text ? (
        <PopupItem key={i} role="menuitem" $off={e.off}>
          <PopupIcon>{e.icon && icon[e.icon]}</PopupIcon>
          <PopupLabel><Mixed text={e.text} /></PopupLabel>
          {e.keys && <Shortcut>{e.keys}</Shortcut>}
          {e.sub && <SubArrow />}
          {e.marked && <Marker />}
        </PopupItem>
      ) : (
        <PopupRule key={i} />
      ),
    )}
    <PopupMore aria-label="Show all commands">
      <MoreDisc>
        <svg width="7" height="9" viewBox="0 0 7 9" fill="none" stroke="#000" strokeWidth="1.500" aria-hidden="true">
          <path d="M1 1l2.500 2.500 2.500-2.500M1 5l2.500 2.500 2.500-2.500" />
        </svg>
      </MoreDisc>
    </PopupMore>
  </Popup>
);

export default function App() {
  return (
    <Shell>
      <GlobalStyle />
      <BarRow>
        <Bar>
          <Tools list={["blank", "folderPage", "bookPage", "graphPage", "matrixPage", "fx:v", "layoutPage", "notesPage", "funcPage", "|", "open", "openPage", "save", "savePage", "|", "wizard", "import1", "importMany", "excel", "|", "batch", "runner", "|"]} />
          <Combo w={56} value="100%" label="Zoom" plain />
          <Tools
            list={["|", "print", "slide", "ppt", "film", "|", "brush", "twoWin", "waveWin:v", "|", "tree", "|", "lensYellow", "lensGraph", "table", "notePen", "gear", "|", "addCol"]}
            active="lensGraph"
          />
        </Bar>
        <Bar>
          <Tools list={["sumCol", "sumRow", "sort", "|", "numCol", "|", ...plotTools, "ibeam", "abc", "home", "|"]} />
          <GlyphButton $size={15} $sans>G</GlyphButton>
          <GlyphButton $size={15} $sans>S</GlyphButton>
          <Tools list={["|", "first", "prev", "next", "last"]} />
        </Bar>
      </BarRow>

      <MenuBar>
        <Grip />
        {menus.map((m, i) => <MenuBarItem key={i}><Mixed text={m} /></MenuBarItem>)}
      </MenuBar>

      <BarRow>
        <Bar><Tools list={["cut", "copy", "paste"]} /></Bar>
        <Bar>
          <FontCombo><Combo w={125} value="默认: 宋体" label="Font" lead={<FontMark>T<b>r</b></FontMark>} /></FontCombo>
          <Combo w={57} value="0" label="Font size" />
          <GlyphButton>B</GlyphButton>
          <GlyphButton $italic>I</GlyphButton>
          <GlyphButton $underline>U</GlyphButton>
          <GlyphButton $size={14} aria-label="Superscript">x<Scripts><span>2</span></Scripts></GlyphButton>
          <GlyphButton $size={14} aria-label="Subscript">x<Scripts><span /><span>2</span></Scripts></GlyphButton>
          <GlyphButton $size={14} aria-label="Super and subscript">x<Scripts><span>2</span><span>1</span></Scripts></GlyphButton>
          <GlyphButton $size={16}>αβ</GlyphButton>
          <Tools list={["growFont", "shrinkFont", "alignLines:v", "spaceLines:v", "fontColor:off"]} drop={11} />
        </Bar>
        <Bar>
          <Tools list={["fill:off", "palette:off", "pen:off"]} drop={13} />
          <Tools list={["bulb"]} />
          <Combo w={57} value="" label="Line style" lead={<LineSample />} />
          <Combo w={57} value="0" label="Line width" />
          <Swatch aria-label="Fill pattern" />
          <Drop $w={13} aria-label="Fill pattern options"><Caret color="#777d8b" /></Drop>
          <Combo w={57} value="0" label="Pattern width" />
          <Tools list={["hatch:off", "dotGrid:off", "dotGrid:off"]} drop={13} />
        </Bar>
        <Bar>
          <Tools list={["dotGrid", "dotGrid", "dotGrid", "dotGrid", "dotGrid", "dotGrid", "dbLens", "dbPen", "dbOpen", "dbGlasses", "dbGrid", "dbX"]} />
        </Bar>
      </BarRow>

      <Body>
        <SideTabs>
          {sideTabs.map((t) => <SideTab key={t.text} $h={t.h} $current={t.current}>{t.text}</SideTab>)}
        </SideTabs>
        <ToolColumn>
          <Side list={tools1} w={34} active="pointer" />
          <Side list={tools2} w={26} />
        </ToolColumn>
        <Mdi>
          <DocWindow name="Graph1 *" grow={814} pad="8px 0 9px"><TransmissionChart /></DocWindow>
          <DocWindow name="Enlarged *" active grow={813} pad="3px 0 8px"><EnlargedChart /></DocWindow>
        </Mdi>
      </Body>
      <ContextMenu />
    </Shell>
  );
}
